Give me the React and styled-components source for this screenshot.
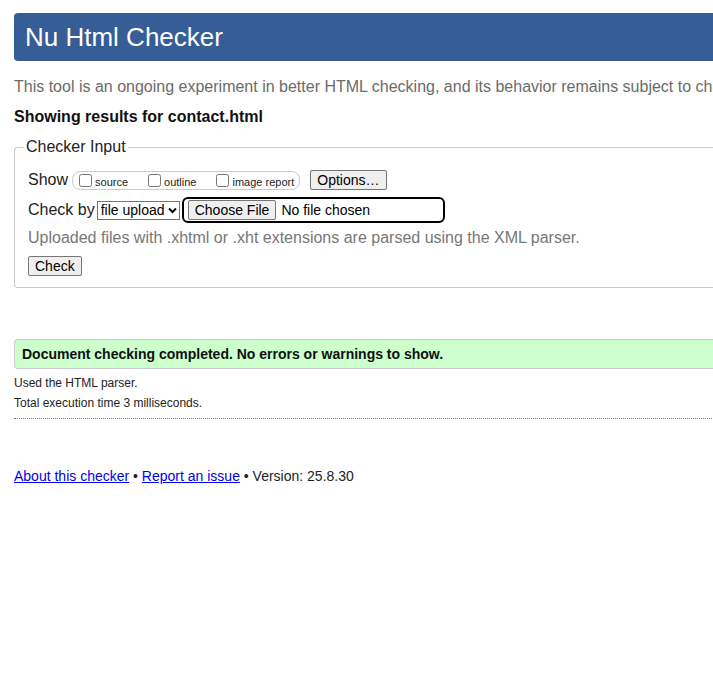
import React from "react";
import styled, { createGlobalStyle } from "styled-components";

const Global = createGlobalStyle`
  html, body { margin: 0; padding: 0; background: #fff; overflow: hidden; }
  body { font-family: "Liberation Sans", Arial, sans-serif; color: #000; }
`;

const Page = styled.div`
  width: 1000px;
  padding: 13px 0 0 14px;
  box-sizing: border-box;
`;

const Header = styled.h1`
  margin: 0;
  height: 48px;
  display: flex;
  align-items: center;
  padding-left: 11px;
  background: #365d95;
  color: #fff;
  font-size: 26px;
  font-weight: normal;
  border-radius: 4px 0 0 4px;
`;

const Intro = styled.p`
  margin: 17px 0 0;
  font-size: 16px;
  line-height: 18px;
  color: #6b6b6b;
  white-space: nowrap;
`;

const Results = styled.p`
  margin: 12px 0 0;
  font-size: 16px;
  line-height: 18px;
  font-weight: bold;
  color: #111;
`;

const Fieldset = styled.fieldset`
  margin: 12px 0 0;
  padding: 2px 13px 11px 13px;
  border: 1px solid #ccc;
  border-right: none;
  border-radius: 4px 0 0 4px;
`;

const Legend = styled.legend`
  margin-left: -4px;
  padding: 0 2px;
  font-size: 16px;
  line-height: 18px;
  color: #222;
`;

const Row = styled.div`
  display: flex;
  align-items: center;
  gap: ${(p) => p.$gap || 4}px;
  margin-top: ${(p) => p.$mt || 0}px;
  font-size: 16px;
  color: #222;
`;

const ShowBox = styled.div`
  display: flex;
  align-items: center;
  height: 17px;
  padding: 0 5px 0 6px;
  border: 1px solid #ccc;
  border-radius: 8px;
  gap: 20px;
`;

const Opt = styled.label`
  display: flex;
  align-items: flex-end;
  font-size: 11px;
  line-height: 12px;
  color: #222;
  gap: 3px;
  padding-top: 2px;
`;

const Box = styled.input`
  margin: 0 0 1px;
  width: 13px;
  height: 13px;
`;

const Button = styled.button`
  font-family: "Liberation Sans", Arial, sans-serif;
  font-size: 14px;
  height: ${(p) => p.$h || 20}px;
  padding: 0 6px;
  margin-left: ${(p) => p.$ml || 0}px;
  background: #efefef;
  border: 1px solid #767676;
  border-radius: 2px;
  color: #000;
`;

const SelectWrap = styled.div`
  position: relative;
  display: flex;
  width: 83px;
  height: 19px;
`;

const Select = styled.select`
  appearance: none;
  -webkit-appearance: none;
  font-family: "Liberation Sans", Arial, sans-serif;
  font-size: 14px;
  width: 100%;
  height: 100%;
  padding: 0 0 0 3px;
  border: 1px solid #767676;
  border-radius: 0;
  background: #fff;
  color: #000;
`;

const Chevron = styled.svg`
  position: absolute;
  right: 3px;
  top: 6px;
  width: 9px;
  height: 7px;
  pointer-events: none;
`;

const FileWrap = styled.div`
  display: flex;
  align-items: center;
  width: 259px;
  height: 22px;
  border: 2px solid #000;
  border-radius: 6px;
  gap: 5px;
  font-size: 14px;
  color: #000;
`;

const Hint = styled.p`
  margin: 6px 0 0;
  font-size: 16px;
  line-height: 18px;
  color: #777;
`;

const CheckRow = styled.div`
  margin-top: 9px;
`;

const Success = styled.div`
  margin-top: 51px;
  padding: 6px 7px;
  border: 1px solid #ccc;
  border-right: none;
  border-radius: 4px 0 0 4px;
  background: #ccffcc;
  font-size: 14px;
  line-height: 16px;
  font-weight: bold;
  color: #111;
`;

const Small = styled.p`
  margin: ${(p) => p.$mt}px 0 0;
  font-size: 12px;
  line-height: 14px;
  color: #222;
`;

const Rule = styled.hr`
  margin: 8px 0 0;
  border: none;
  border-top: 1px dotted #777;
  height: 0;
`;

const Footer = styled.p`
  margin: 49px 0 0;
  font-size: 14px;
  line-height: 16px;
  color: #222;
`;

const Link = styled.a`
  color: #0000ee;
  text-decoration: underline;
`;

export default function App() {
  return (
    <>
      <Global />
      <Page>
        <Header>Nu Html Checker</Header>
        <Intro>
          This tool is an ongoing experiment in better HTML checking, and its behavior remains subject to change
        </Intro>
        <Results>Showing results for contact.html</Results>
        <Fieldset>
          <Legend>Checker Input</Legend>
          <Row $mt={12}>
            <span>Show</span>
            <ShowBox>
              <Opt>
                <Box type="checkbox" />
                source
              </Opt>
              <Opt>
                <Box type="checkbox" />
                outline
              </Opt>
              <Opt>
                <Box type="checkbox" />
                image report
              </Opt>
            </ShowBox>
            <Button $ml={6} type="button">Options…</Button>
          </Row>
          <Row $mt={7} $gap={2}>
            <span>Check by</span>
            <SelectWrap>
              <Select defaultValue="file">
                <option value="address">address</option>
                <option value="file">file upload</option>
                <option value="text">text input</option>
              </Select>
              <Chevron viewBox="0 0 9 7">
                <path d="M1 1.5 L4.5 5 L8 1.5" fill="none" stroke="#000" strokeWidth="2" />
              </Chevron>
            </SelectWrap>
            <FileWrap>
              <Button $ml={4} type="button">Choose File</Button>
              <span>No file chosen</span>
            </FileWrap>
          </Row>
          <Hint>Uploaded files with .xhtml or .xht extensions are parsed using the XML parser.</Hint>
          <CheckRow>
            <Button type="button">Check</Button>
          </CheckRow>
        </Fieldset>
        <Success>Document checking completed. No errors or warnings to show.</Success>
        <Small $mt={7}>Used the HTML parser.</Small>
        <Small $mt={6}>Total execution time 3 milliseconds.</Small>
        <Rule />
        <Footer>
          <Link href="#">About this checker</Link> • <Link href="#">Report an issue</Link> • Version: 25.8.30
        </Footer>
      </Page>
    </>
  );
}
